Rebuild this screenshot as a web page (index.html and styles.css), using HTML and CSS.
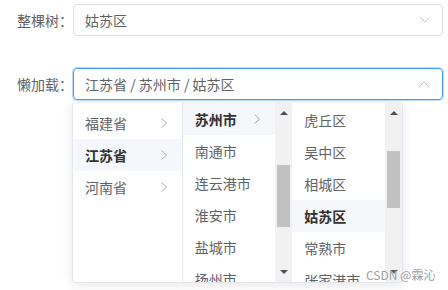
FILE: index.html
```html
<html>
<head>
<meta charset="utf-8">
<link rel="stylesheet" href="styles.css">
</head>
<body>
<div class="form">
	<div class="formItem">
		<label class="label">整棵树：</label>
		<div class="input">
			<span class="value">姑苏区</span>
			<svg class="arrow" width="10" height="6" viewBox="0 0 10 6"><path d="M0.5 0.5 L5 5 L9.5 0.5" fill="none" stroke="#c0c4cc" stroke-width="1"/></svg>
		</div>
	</div>

	<div class="formItem second">
		<label class="label">懒加载：</label>
		<div class="input focused">
			<span class="value">江苏省 / 苏州市 / 姑苏区</span>
			<svg class="arrow" width="12" height="7" viewBox="0 0 12 7"><path d="M0.5 6.5 L6 1 L11.5 6.5" fill="none" stroke="#c0c4cc" stroke-width="1"/></svg>
		</div>
	</div>

	<div class="panel">
		<div class="menu first">
			<div class="node">福建省<svg class="chev" width="6" height="10" viewBox="0 0 6 10"><path d="M0.5 0.5 L5.5 5 L0.5 9.5" fill="none" stroke="#a8abb2" stroke-width="1"/></svg></div>
			<div class="node active">江苏省<svg class="chev" width="6" height="10" viewBox="0 0 6 10"><path d="M0.5 0.5 L5.5 5 L0.5 9.5" fill="none" stroke="#a8abb2" stroke-width="1"/></svg></div>
			<div class="node">河南省<svg class="chev" width="6" height="10" viewBox="0 0 6 10"><path d="M0.5 0.5 L5.5 5 L0.5 9.5" fill="none" stroke="#a8abb2" stroke-width="1"/></svg></div>
		</div>

		<div class="menu scroll">
			<div class="list">
				<div class="node active">苏州市<svg class="chev" width="6" height="10" viewBox="0 0 6 10"><path d="M0.5 0.5 L5.5 5 L0.5 9.5" fill="none" stroke="#a8abb2" stroke-width="1"/></svg></div>
				<div class="node">南通市</div>
				<div class="node">连云港市</div>
				<div class="node">淮安市</div>
				<div class="node">盐城市</div>
				<div class="node">扬州市</div>
			</div>
			<div class="scrollbar">
				<div class="up"></div>
				<div class="thumb thumb2"></div>
				<div class="down"></div>
			</div>
		</div>

		<div class="menu scroll">
			<div class="list third">
				<div class="node">虎丘区</div>
				<div class="node">吴中区</div>
				<div class="node">相城区</div>
				<div class="node active">姑苏区</div>
				<div class="node">常熟市</div>
				<div class="node">张家港市</div>
			</div>
			<div class="scrollbar">
				<div class="up"></div>
				<div class="thumb thumb3"></div>
				<div class="down"></div>
			</div>
		</div>
	</div>
</div>

<div class="watermark">CSDN @霖沁</div>
</body>
</html>
```

FILE: styles.css
```css
body {
	margin: 0;
	background-color: #fff;
	font-family: "Noto Sans CJK SC", "Noto Sans", sans-serif;
	font-size: 14px;
	color: #606266;
}

.form {
	padding-top: 4px;
}

.formItem {
	display: flex;
	align-items: center;
	height: 32px;
}

.formItem.second {
	margin-top: 32px;
}

.label {
	width: 73px;
	text-align: right;
	color: #606266;
}

.input {
	box-sizing: border-box;
	width: 370px;
	height: 32px;
	border: 1px solid #dcdfe6;
	border-radius: 4px;
	padding: 0 12px 0 11px;
	display: flex;
	align-items: center;
	justify-content: space-between;
}

.input.focused {
	border-color: #409eff;
	box-shadow: 0 0 0 1px rgba(64, 158, 255, 0.35);
}

.value {
	color: #606266;
}

.panel {
	display: flex;
	width: 331px;
	height: 181px;
	box-sizing: border-box;
	margin: 2px 0 0 72px;
	border: 1px solid #e4e7ed;
	border-top-color: #eef0f3;
	border-radius: 4px;
	box-shadow: 0 2px 12px rgba(0, 0, 0, 0.1);
	background-color: #fff;
	overflow: hidden;
}

.menu {
	width: 110px;
	box-sizing: border-box;
	height: 100%;
	overflow: hidden;
}

.menu.first {
	border-right: 1px solid #e4e7ed;
	padding-top: 4px;
}

.menu.scroll {
	display: flex;
}

.list {
	flex: 1;
	overflow: hidden;
}

.list.third {
	padding-top: 1px;
}

.node {
	height: 32px;
	line-height: 32px;
	padding: 0 15px 0 12px;
	display: flex;
	align-items: center;
	justify-content: space-between;
	white-space: nowrap;
	color: #606266;
}

.node.active {
	background-color: #f5f7fa;
	color: #303133;
	font-weight: bold;
}

.scrollbar {
	position: relative;
	width: 17px;
	height: 100%;
	background-color: #f1f1f1;
}

.up {
	position: absolute;
	left: 5px;
	top: 8px;
	border-left: 4px solid transparent;
	border-right: 4px solid transparent;
	border-bottom: 4px solid #505050;
}

.down {
	position: absolute;
	left: 5px;
	bottom: 8px;
	border-left: 4px solid transparent;
	border-right: 4px solid transparent;
	border-top: 4px solid #505050;
}

.thumb {
	position: absolute;
	left: 2px;
	width: 13px;
	background-color: #c1c1c1;
}

.thumb2 {
	top: 62px;
	height: 62px;
}

.thumb3 {
	top: 48px;
	height: 57px;
}

.watermark {
	position: absolute;
	left: 366px;
	top: 266px;
	font-size: 12px;
	color: #a0a0a0;
	text-shadow: 0 0 2px #fff;
}
```
